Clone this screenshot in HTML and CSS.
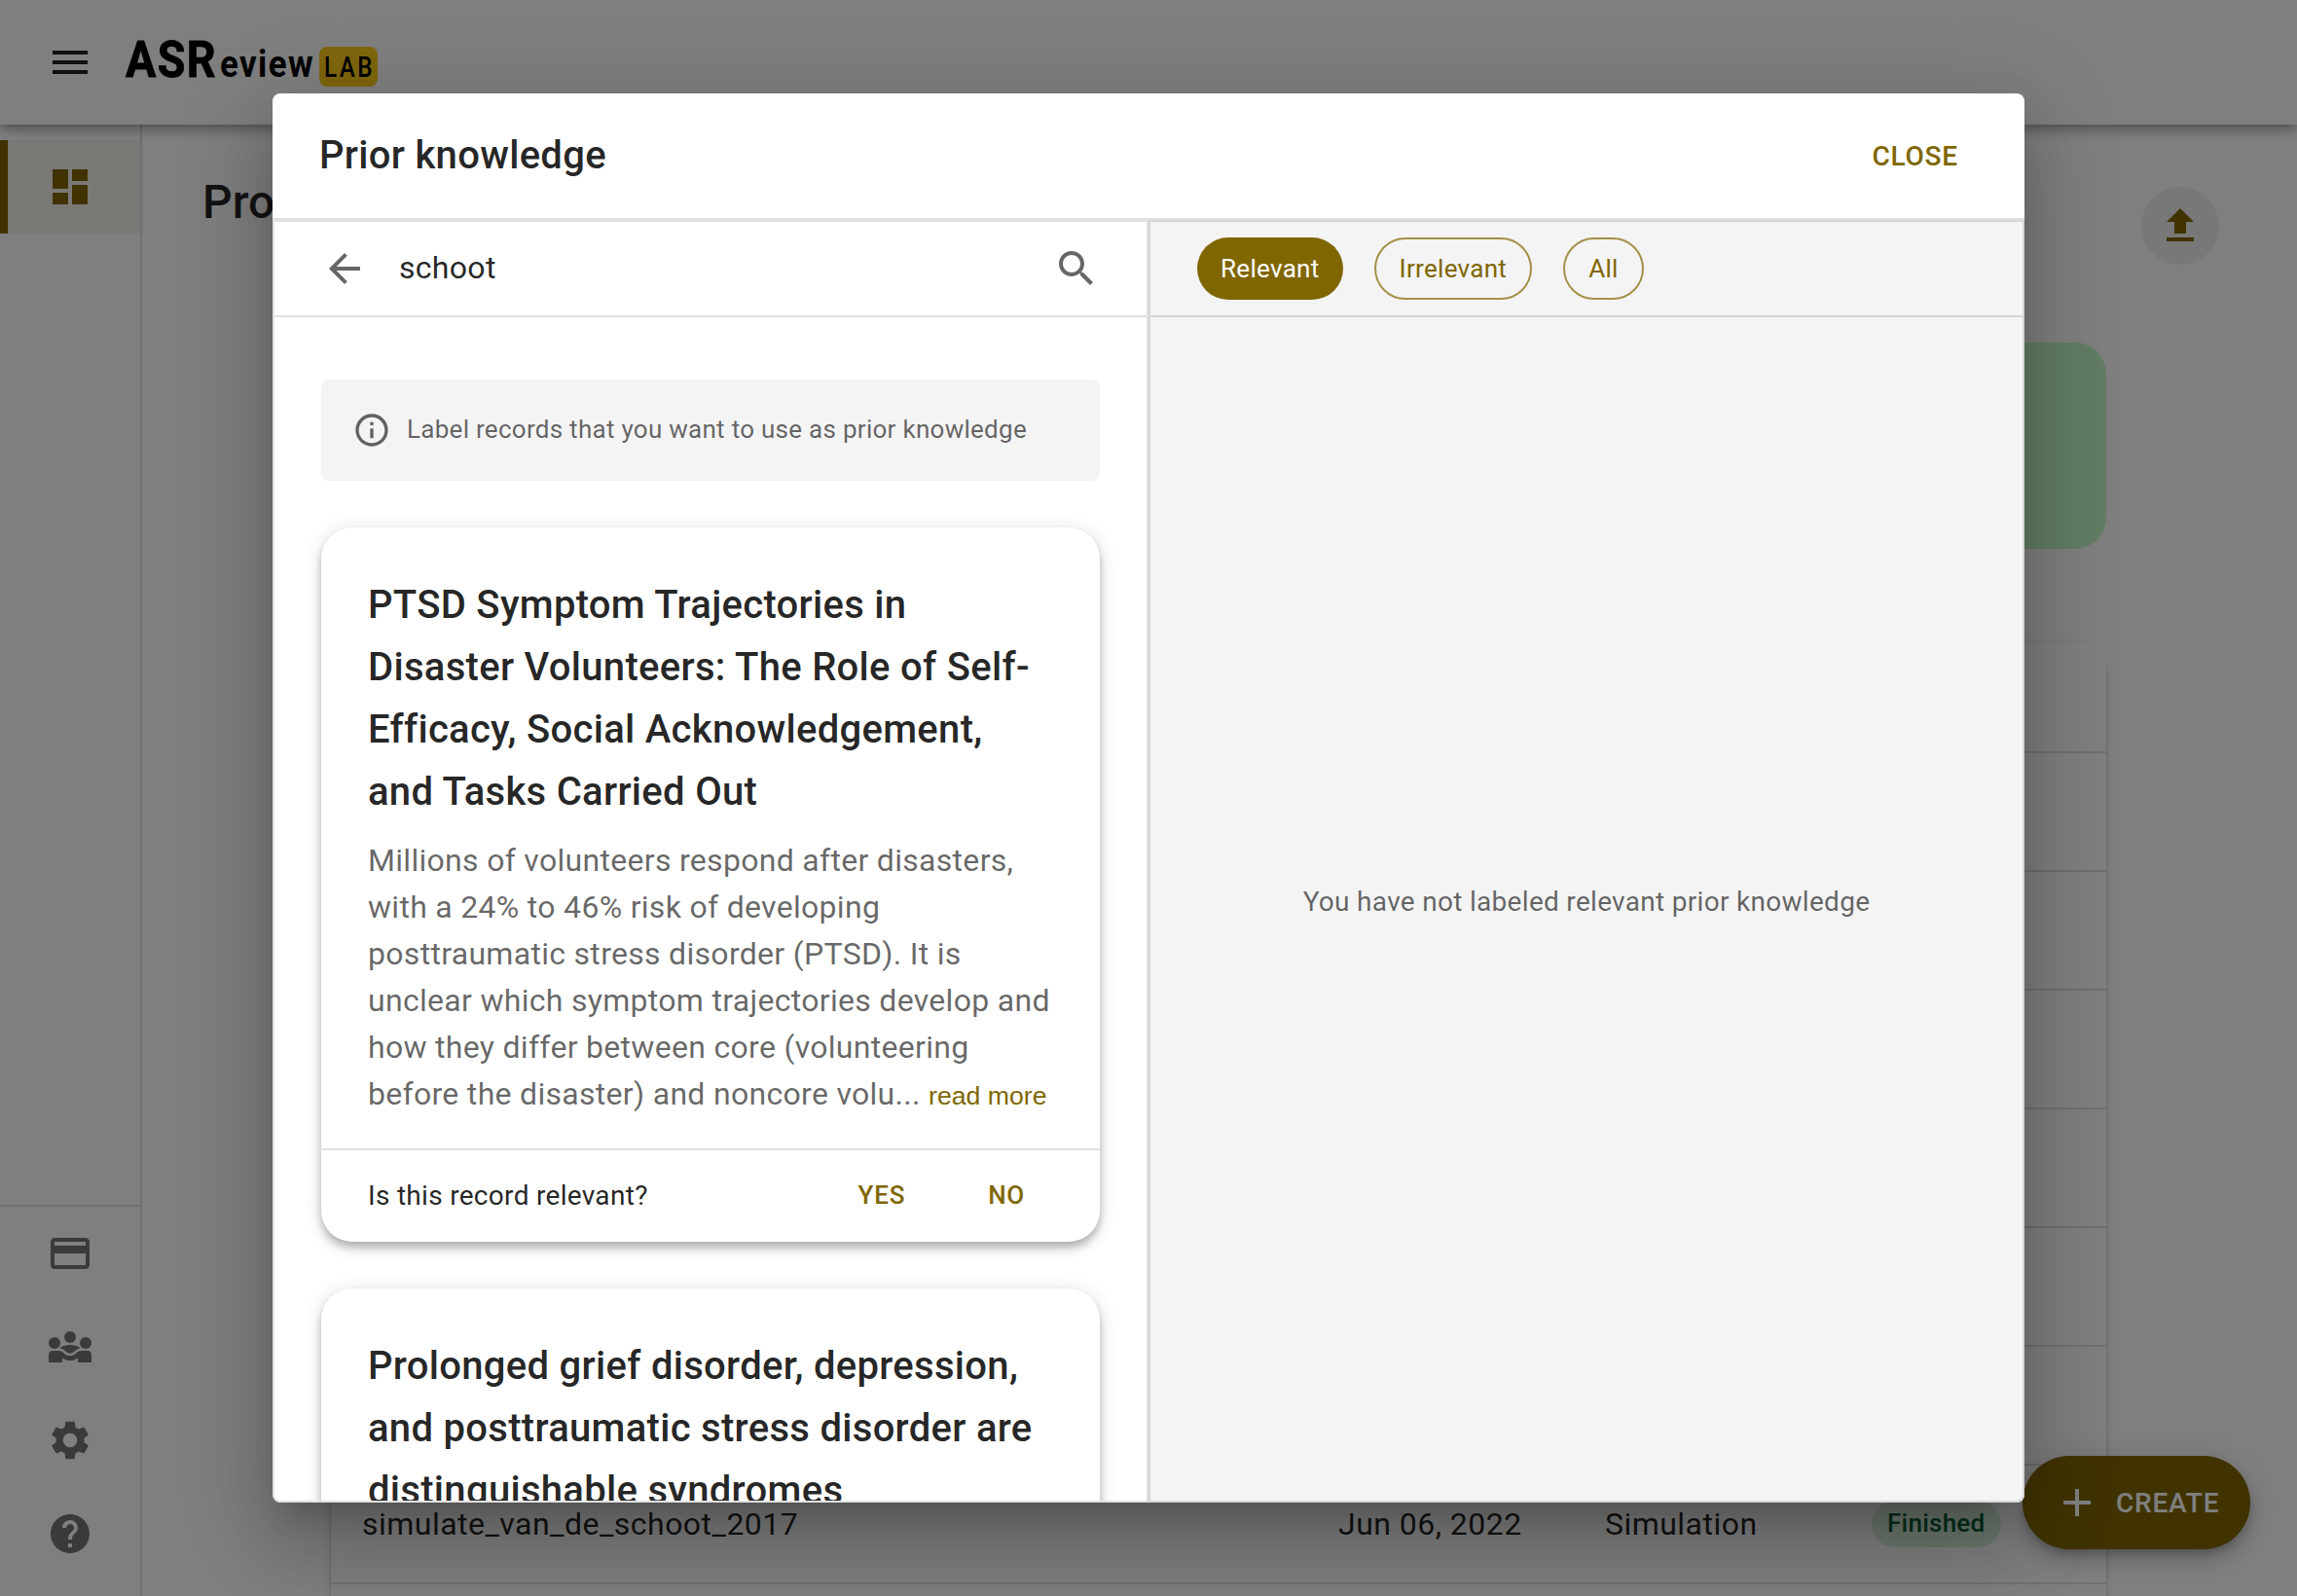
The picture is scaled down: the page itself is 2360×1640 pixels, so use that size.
FILE: index.html
```html
<!DOCTYPE html>
<html lang="en">
<head>
<meta charset="utf-8">
<title>ASReview LAB</title>
<link rel="stylesheet" href="styles.css">
</head>
<body>
<div class="app">
  <header class="appbar">
    <svg class="icon" viewBox="0 0 24 24"><path d="M3 18h18v-2H3v2zm0-5h18v-2H3v2zm0-7v2h18V6H3z"/></svg>
    <svg class="logo" viewBox="0 0 264 56">
      <text class="logo-name" x="1" y="43" font-size="51" textLength="94" lengthAdjust="spacingAndGlyphs">ASR</text>
      <text class="logo-name logo-tail" x="98" y="43" font-size="38" textLength="97" lengthAdjust="spacingAndGlyphs">eview</text>
      <rect x="200" y="12" width="60" height="41" rx="8" fill="#ffcc1a"/>
      <text class="logo-lab" x="205" y="43" font-size="29.5" textLength="52" lengthAdjust="spacingAndGlyphs">LAB</text>
    </svg>
  </header>
  <div class="body">
    <nav class="sidebar">
      <div class="nav-item active"><svg class="icon" viewBox="0 0 24 24"><path d="M3 13h8V3H3v10zm0 8h8v-6H3v6zm10 0h8V11h-8v10zm0-18v6h8V3h-8z"/></svg></div>
      <div class="nav-bottom">
        <div class="nav-item"><svg class="icon" viewBox="0 0 24 24"><path d="M20 4H4c-1.11 0-1.99.89-1.99 2L2 18c0 1.11.89 2 2 2h16c1.11 0 2-.89 2-2V6c0-1.11-.89-2-2-2zm0 14H4v-6h16v6zm0-10H4V6h16v2z"/></svg></div>
        <div class="nav-item"><svg class="icon" viewBox="0 0 24 24"><circle cx="4" cy="10" r="3"/><circle cx="20" cy="10" r="3"/><circle cx="12" cy="7" r="3"/><path d="M6.500 12.600C8.200 11.500 10 11 12 11s3.800.5 5.500 1.600c-1.800.3-2.600 1.100-3.300 1.800-1.300 1.300-3.100 1.300-4.400 0-.7-.7-1.500-1.500-3.300-1.800z"/><path d="M1 20v-4c0-1.200.9-2 2-2h3.300c1 0 1.700.4 2.400 1.100 1.900 2 4.700 2 6.600 0 .7-.7 1.400-1.100 2.400-1.100H21c1.100 0 2 .8 2 2v4h-7v-2.300c-2.500 1.700-5.500 1.700-8 0V20z"/></svg></div>
        <div class="nav-item"><svg class="icon" viewBox="0 0 24 24"><path d="M19.140 12.940c.04-.3.060-.61.060-.94 0-.32-.02-.64-.07-.94l2.030-1.580c.18-.14.23-.41.120-.61l-1.920-3.320c-.12-.22-.37-.29-.59-.22l-2.390.96c-.5-.38-1.030-.7-1.620-.94l-.36-2.540c-.04-.24-.24-.41-.48-.41h-3.840c-.24 0-.43.170-.47.410l-.36 2.540c-.59.240-1.130.570-1.620.940l-2.390-.96c-.22-.08-.47 0-.59.220L2.740 8.870c-.12.210-.08.470.120.610l2.030 1.580c-.05.300-.09.630-.09.940s.02.640.070.940l-2.030 1.580c-.18.140-.23.410-.12.610l1.920 3.320c.12.220.370.290.590.220l2.390-.96c.5.380 1.030.7 1.620.940l.36 2.540c.05.240.24.410.48.410h3.840c.24 0 .44-.17.470-.41l.36-2.540c.59-.24 1.130-.56 1.620-.94l2.390.960c.22.080.47 0 .59-.22l1.920-3.320c.12-.22.070-.47-.12-.61l-2.010-1.580zM12 15.600c-1.980 0-3.600-1.620-3.600-3.600s1.620-3.600 3.600-3.600 3.600 1.620 3.600 3.600-1.620 3.600-3.600 3.600z"/></svg></div>
        <div class="nav-item"><svg class="icon" viewBox="0 0 24 24"><path d="M12 2C6.480 2 2 6.480 2 12s4.480 10 10 10 10-4.480 10-10S17.520 2 12 2zm1 17h-2v-2h2v2zm2.070-7.750l-.9.920C13.450 12.900 13 13.500 13 15h-2v-.5c0-1.100.45-2.100 1.170-2.830l1.240-1.260c.37-.36.590-.86.590-1.410 0-1.100-.9-2-2-2s-2 .9-2 2H8c0-2.210 1.790-4 4-4s4 1.790 4 4c0 .88-.36 1.680-.93 2.250z"/></svg></div>
      </div>
    </nav>
    <main class="page">
      <div class="page-head">
        <h1>Projects</h1>
        <div class="upload"><svg class="icon" viewBox="0 0 24 24"><path d="M5 20h14v-2H5v2zm0-10h4v6h6v-6h4l-7-7-7 7z"/></svg></div>
      </div>
      <div class="stat-card"></div>
      <div class="table">
        <div class="row head"></div>
        <div class="row"></div><div class="row"></div><div class="row"></div>
        <div class="row"></div><div class="row"></div><div class="row"></div>
        <div class="row">
          <span class="name">simulate_van_de_schoot_2017</span>
          <span class="date">Jun 06, 2022</span>
          <span class="mode">Simulation</span>
          <span class="status">Finished</span>
        </div>
        <div class="row"></div>
      </div>
    </main>
  </div>
  <div class="fab"><svg class="icon" viewBox="0 0 24 24"><path d="M19 13h-6v6h-2v-6H5v-2h6V5h2v6h6v2z"/></svg><span>CREATE</span></div>
</div>

<div class="backdrop">
  <section class="dialog">
    <div class="dialog-head"><h2>Prior knowledge</h2><span class="btn">CLOSE</span></div>
    <div class="panes">
      <div class="pane">
        <div class="search">
          <svg class="icon" viewBox="0 0 24 24"><path d="M20 11H7.830l5.590-5.590L12 4l-8 8 8 8 1.410-1.410L7.830 13H20v-2z"/></svg>
          <span class="query">schoot</span>
          <svg class="icon" viewBox="0 0 24 24"><path d="M15.500 14h-.79l-.28-.27C15.410 12.590 16 11.110 16 9.500 16 5.910 13.090 3 9.500 3S3 5.910 3 9.500 5.910 16 9.500 16c1.610 0 3.090-.59 4.230-1.570l.27.280v.79l5 4.990L20.490 19l-4.990-5zm-6 0C7.010 14 5 11.990 5 9.500S7.010 5 9.500 5 14 7.010 14 9.500 11.990 14 9.500 14z"/></svg>
        </div>
        <div class="results">
          <div class="alert">
            <svg class="info" viewBox="0 0 24 24"><path d="M11 7h2v2h-2V7zm0 4h2v6h-2v-6zm1-9C6.480 2 2 6.480 2 12s4.480 10 10 10 10-4.480 10-10S17.520 2 12 2zm0 18c-4.410 0-8-3.590-8-8s3.590-8 8-8 8 3.590 8 8-3.590 8-8 8z"/></svg>
            <span>Label records that you want to use as prior knowledge</span>
          </div>
          <article class="card">
            <div class="card-body">
              <h3>PTSD Symptom Trajectories in Disaster Volunteers: The Role of Self-Efficacy, Social Acknowledgement, and Tasks Carried Out</h3>
              <p>Millions of volunteers respond after disasters, with a 24% to 46% risk of developing posttraumatic stress disorder (PTSD). It is unclear which symptom trajectories develop and how they differ between core (volunteering before the disaster) and noncore volu... <a class="more">read more</a></p>
            </div>
            <div class="card-actions"><span class="question">Is this record relevant?</span><span class="btn small">YES</span><span class="btn small">NO</span></div>
          </article>
          <article class="card">
            <div class="card-body">
              <h3>Prolonged grief disorder, depression, and posttraumatic stress disorder are distinguishable syndromes</h3>
            </div>
          </article>
        </div>
      </div>
      <div class="pane labeled">
        <div class="filters"><span class="chip filled">Relevant</span><span class="chip">Irrelevant</span><span class="chip">All</span></div>
        <div class="empty">You have not labeled relevant prior knowledge</div>
      </div>
    </div>
  </section>
</div>
</body>
</html>
```
FILE: styles.css
```css
* { box-sizing: border-box; }
body {
  margin: 0;
  font-family: Roboto, "Liberation Sans", sans-serif;
  font-size: 32px;
  letter-spacing: 0.00938em;
  color: rgba(0, 0, 0, 0.87);
  background: #fff;
}
h1, h2, h3, p { margin: 0; }
h1, h2, h3 { font-weight: 500; }
svg { display: block; fill: currentColor; flex: none; }
.icon { width: 48px; height: 48px; }

.app {
  position: relative;
  width: 2360px;
  height: 1640px;
  overflow: hidden;
  display: flex;
  flex-direction: column;
}
.appbar {
  position: relative;
  z-index: 2;
  flex: none;
  height: 128px;
  padding-left: 48px;
  display: flex;
  align-items: center;
  background: #fff;
  box-shadow: 0 4px 8px -2px rgba(0,0,0,.2), 0 8px 10px rgba(0,0,0,.14), 0 2px 20px rgba(0,0,0,.12);
}
.logo { width: 264px; height: 56px; margin-left: 32px; overflow: visible; }
.logo-name, .logo-lab { fill: #000; letter-spacing: 0; }
.logo-name { font-weight: 700; stroke: #000; stroke-width: 0.8px; letter-spacing: 1.5px; }
.logo-tail { stroke-width: 0; }
.logo-lab { font-weight: 500; letter-spacing: 3px; }

.body { flex: 1; display: flex; min-height: 0; }
.sidebar {
  width: 146px;
  border-right: 2px solid rgba(0,0,0,.12);
  padding-top: 16px;
  display: flex;
  flex-direction: column;
  justify-content: space-between;
}
.nav-item {
  height: 96px;
  display: flex;
  align-items: center;
  justify-content: center;
  color: rgba(0,0,0,.54);
}
.nav-item.active {
  color: #806600;
  background: rgba(128,102,0,.08);
  border-left: 8px solid #806600;
  padding-right: 8px;
}
.nav-bottom { border-top: 2px solid rgba(0,0,0,.12); height: 402px; }

.page { flex: 1; padding: 40px 80px 0 62px; }
.page-head { display: flex; justify-content: space-between; height: 128px; }
h1 { font-size: 48px; line-height: 77px; padding-top: 1px; letter-spacing: 0; }
.upload {
  width: 80px;
  height: 80px;
  margin-top: 24px;
  border-radius: 50%;
  background: rgba(0,0,0,.06);
  color: #806600;
  display: flex;
  align-items: center;
  justify-content: center;
}
.stat-card {
  width: 1824px;
  height: 212px;
  margin: 56px 0 96px 132px;
  border-radius: 32px;
  background: #c5fbc9;
}
.table {
  width: 1824px;
  margin-left: 132px;
  border-radius: 32px;
  box-shadow: 0 6px 2px -4px rgba(0,0,0,.2), 0 4px 4px rgba(0,0,0,.14), 0 2px 10px rgba(0,0,0,.12);
}
.row {
  height: 122px;
  border-bottom: 2px solid rgba(0,0,0,.12);
  display: grid;
  grid-template-columns: 1003px 274px 274px 1fr;
  align-items: center;
  padding-left: 32px;
  letter-spacing: 0.0147em;
}
.row.head { height: 114px; background: #fff; }
.status {
  justify-self: start;
  height: 48px;
  padding: 0 17px 0 16px;
  border-radius: 24px;
  background: #dbf1dc;
  color: #005f36;
  font-size: 26px;
  font-weight: 500;
  line-height: 46px;
  letter-spacing: 0.00938em;
}
.fab {
  position: absolute;
  right: 48px;
  bottom: 48px;
  width: 234px;
  height: 96px;
  padding-left: 32px;
  border-radius: 48px;
  display: flex;
  align-items: center;
  gap: 16px;
  background: #806600;
  color: #fff;
  font-size: 28px;
  font-weight: 500;
  letter-spacing: 0.02857em;
  box-shadow: 0 6px 10px -2px rgba(0,0,0,.2), 0 12px 20px rgba(0,0,0,.14), 0 2px 36px rgba(0,0,0,.12);
}

.backdrop {
  position: absolute;
  top: 0;
  left: 0;
  width: 2360px;
  height: 1640px;
  overflow: hidden;
  z-index: 5;
  display: flex;
  align-items: center;
  justify-content: center;
  background: rgba(0,0,0,.5);
}
.dialog {
  width: 1800px;
  height: 1448px;
  border-radius: 8px;
  overflow: hidden;
  display: flex;
  flex-direction: column;
  background: #fff;
  box-shadow: 0 22px 30px -14px rgba(0,0,0,.2), 0 48px 76px 6px rgba(0,0,0,.14), 0 18px 92px 16px rgba(0,0,0,.12);
}
.dialog-head {
  flex: none;
  height: 130px;
  border-bottom: 2px solid #e0e0e0;
  padding: 0 68px 0 48px;
  display: flex;
  align-items: center;
  justify-content: space-between;
}
h2 { font-size: 40px; letter-spacing: 0.0075em; line-height: 64px; }
.btn { font-size: 28px; font-weight: 500; letter-spacing: 0.02857em; color: #806600; }
.panes { flex: 1; display: flex; min-height: 0; }
.pane {
  width: 900px;
  border: 2px solid rgba(0,0,0,.12);
  border-radius: 0 0 0 8px;
  display: flex;
  flex-direction: column;
  overflow: hidden;
}
.search, .filters {
  flex: none;
  height: 98px;
  border-bottom: 2px solid rgba(0,0,0,.12);
  display: flex;
  align-items: center;
}
.search { padding: 0 48px; color: rgba(0,0,0,.6); }
.query { flex: 1; margin-left: 32px; padding-bottom: 2px; color: rgba(0,0,0,.87); }
.results {
  flex: 1;
  min-height: 0;
  overflow: hidden;
  padding: 64px 48px 0;
  display: flex;
  flex-direction: column;
  gap: 48px;
}
.alert {
  flex: none;
  height: 104px;
  padding-left: 32px;
  border-radius: 8px;
  display: flex;
  align-items: center;
  gap: 16px;
  background: #f4f4f4;
  color: rgba(0,0,0,.6);
  font-size: 26px;
  letter-spacing: 0.01071em;
}
.alert span { padding-bottom: 2px; }
.info { width: 40px; height: 40px; }
.card {
  flex: none;
  border-radius: 32px;
  background: #fff;
  box-shadow: 0 4px 8px -2px rgba(0,0,0,.2), 0 8px 10px rgba(0,0,0,.14), 0 2px 20px rgba(0,0,0,.12);
}
.card-body { padding: 48px 48px 32px; }
h3 { font-size: 40px; line-height: 64px; letter-spacing: 0.0075em; margin-bottom: 14px; }
.card p { line-height: 48px; color: rgba(0,0,0,.6); }
.more { font-family: "Liberation Sans", Arial, sans-serif; font-size: 26.67px; letter-spacing: 0; line-height: 1; color: #806600; }
.card-actions {
  height: 96px;
  border-top: 2px solid rgba(0,0,0,.12);
  padding: 0 77px 2px 48px;
  display: flex;
  align-items: center;
}
.question { flex: 1; font-size: 28px; letter-spacing: 0.01071em; }
.small { font-size: 26px; }
.small + .small { margin-left: 85px; }

.pane.labeled { background: #f4f4f4; border-radius: 0 0 8px 0; }
.filters { padding-left: 48px; gap: 32px; }
.chip {
  height: 64px;
  padding: 0 24px;
  border: 2px solid rgba(128,102,0,.7);
  border-radius: 32px;
  line-height: 60px;
  font-size: 26px;
  color: #806600;
}
.chip.filled { background: #806600; border: 0; line-height: 64px; color: #fff; }
.empty {
  flex: 1;
  display: flex;
  align-items: center;
  justify-content: center;
  padding-bottom: 16px;
  font-size: 28px;
  letter-spacing: 0.01071em;
  color: rgba(0,0,0,.6);
}
```
